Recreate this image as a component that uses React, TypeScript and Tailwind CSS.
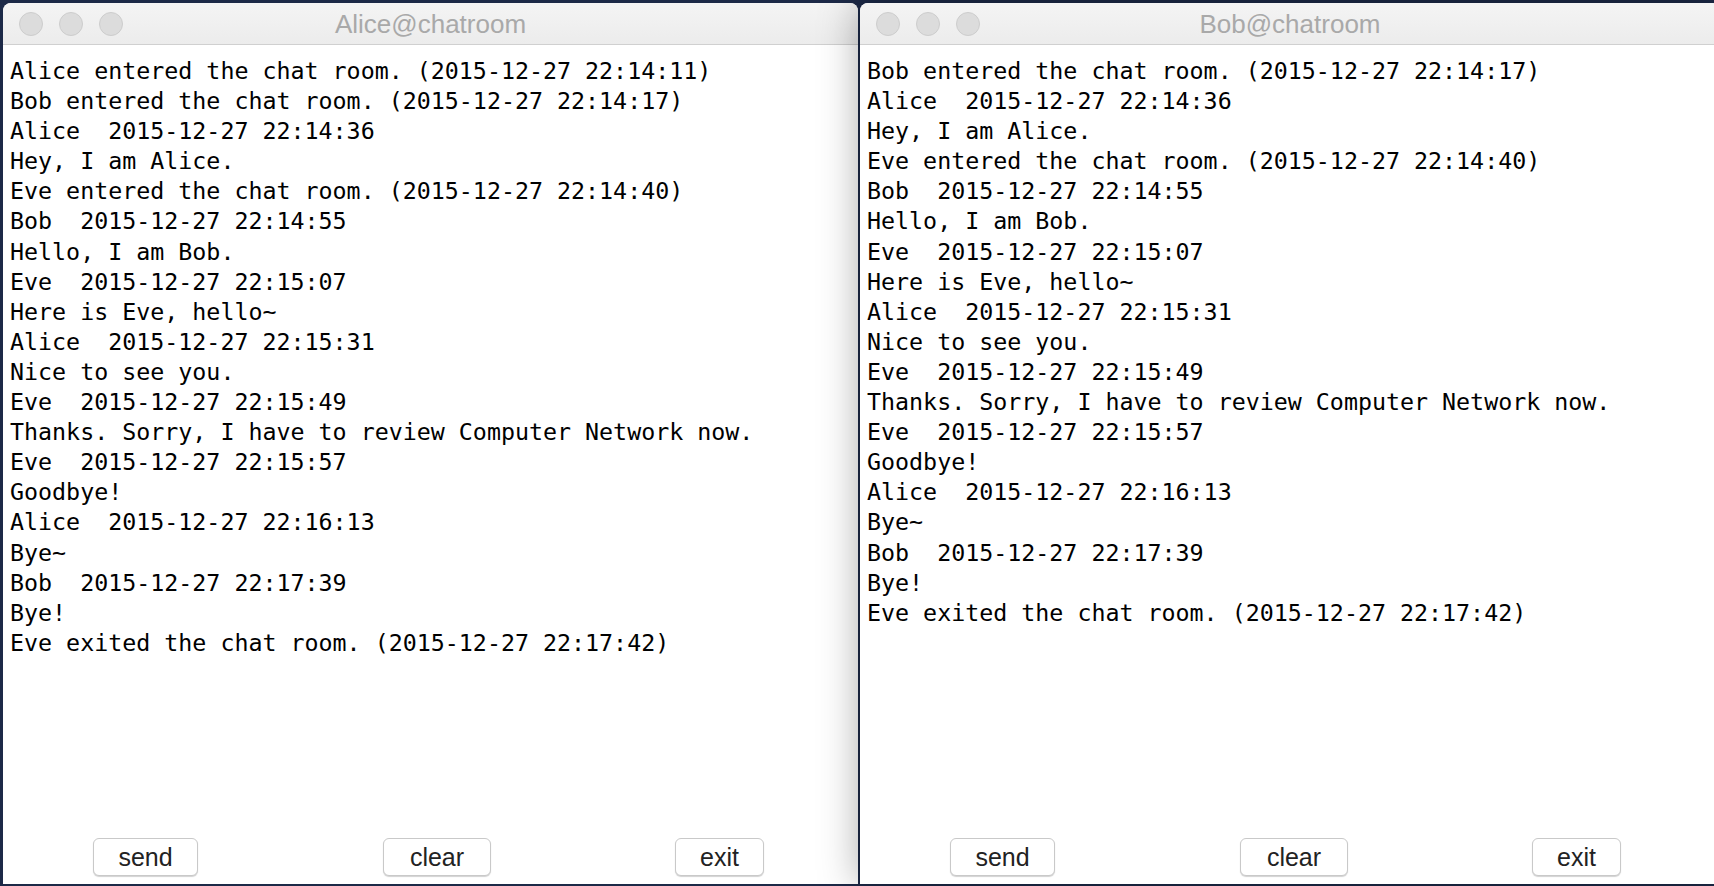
const aliceLog = [
  "Alice entered the chat room. (2015-12-27 22:14:11)",
  "Bob entered the chat room. (2015-12-27 22:14:17)",
  "Alice  2015-12-27 22:14:36",
  "Hey, I am Alice.",
  "Eve entered the chat room. (2015-12-27 22:14:40)",
  "Bob  2015-12-27 22:14:55",
  "Hello, I am Bob.",
  "Eve  2015-12-27 22:15:07",
  "Here is Eve, hello~",
  "Alice  2015-12-27 22:15:31",
  "Nice to see you.",
  "Eve  2015-12-27 22:15:49",
  "Thanks. Sorry, I have to review Computer Network now.",
  "Eve  2015-12-27 22:15:57",
  "Goodbye!",
  "Alice  2015-12-27 22:16:13",
  "Bye~",
  "Bob  2015-12-27 22:17:39",
  "Bye!",
  "Eve exited the chat room. (2015-12-27 22:17:42)",
];

const bobLog = [
  "Bob entered the chat room. (2015-12-27 22:14:17)",
  "Alice  2015-12-27 22:14:36",
  "Hey, I am Alice.",
  "Eve entered the chat room. (2015-12-27 22:14:40)",
  "Bob  2015-12-27 22:14:55",
  "Hello, I am Bob.",
  "Eve  2015-12-27 22:15:07",
  "Here is Eve, hello~",
  "Alice  2015-12-27 22:15:31",
  "Nice to see you.",
  "Eve  2015-12-27 22:15:49",
  "Thanks. Sorry, I have to review Computer Network now.",
  "Eve  2015-12-27 22:15:57",
  "Goodbye!",
  "Alice  2015-12-27 22:16:13",
  "Bye~",
  "Bob  2015-12-27 22:17:39",
  "Bye!",
  "Eve exited the chat room. (2015-12-27 22:17:42)",
];

function Button({ label, className }: { label: string; className: string }) {
  return (
    <button
      className={`h-[38px] rounded-[6px] border border-[#c9c9c9] bg-white text-[25px] leading-none text-[#222] shadow-[0_1px_1px_rgba(0,0,0,0.18)] ${className}`}
      style={{ fontFamily: '"Liberation Sans", Arial, sans-serif' }}
    >
      {label}
    </button>
  );
}

function ChatWindow({ title, lines, className }: { title: string; lines: string[]; className: string }) {
  return (
    <div className={`flex h-[881px] flex-col overflow-hidden rounded-t-[8px] bg-white ${className}`}>
      <div className="relative flex h-[42px] shrink-0 items-center border-b border-[#d0d0d0] bg-gradient-to-b from-[#f4f4f4] to-[#ececec]">
        <div className="absolute left-[16px] top-[9px] flex gap-[16px]">
          <span className="h-[24px] w-[24px] rounded-full border border-[#cdcdcd] bg-[#dcdcdc]" />
          <span className="h-[24px] w-[24px] rounded-full border border-[#cdcdcd] bg-[#dcdcdc]" />
          <span className="h-[24px] w-[24px] rounded-full border border-[#cdcdcd] bg-[#dcdcdc]" />
        </div>
        <div
          className="w-full pt-[2px] text-center text-[26px] text-[#a9a9a9]"
          style={{ fontFamily: '"Liberation Sans", Arial, sans-serif' }}
        >
          {title}
        </div>
      </div>

      <div
        className="flex-1 whitespace-pre pl-[7px] pt-[11px] text-[23.3px] leading-[30.1px] text-black"
        style={{ fontFamily: '"DejaVu Sans Mono", monospace' }}
      >
        {lines.map((line, idx) => (
          <div key={idx}>{line}</div>
        ))}
      </div>

      <div className="flex shrink-0 pb-[8px]">
        <Button label="send" className="ml-[90px] w-[105px]" />
        <Button label="clear" className="ml-[185px] w-[108px]" />
        <Button label="exit" className="ml-[184px] w-[89px]" />
      </div>
    </div>
  );
}

export default function App() {
  return (
    <div className="flex h-[886px] w-[1714px] gap-[2px] overflow-hidden bg-[#1c2947] pl-[3px] pt-[3px]">
      <ChatWindow title="Alice@chatroom" lines={aliceLog} className="w-[855px] shrink-0" />
      <ChatWindow
        title="Bob@chatroom"
        lines={bobLog}
        className="relative z-10 w-[860px] shrink-0 shadow-[0_0_40px_rgba(0,0,0,0.35)]"
      />
    </div>
  );
}
